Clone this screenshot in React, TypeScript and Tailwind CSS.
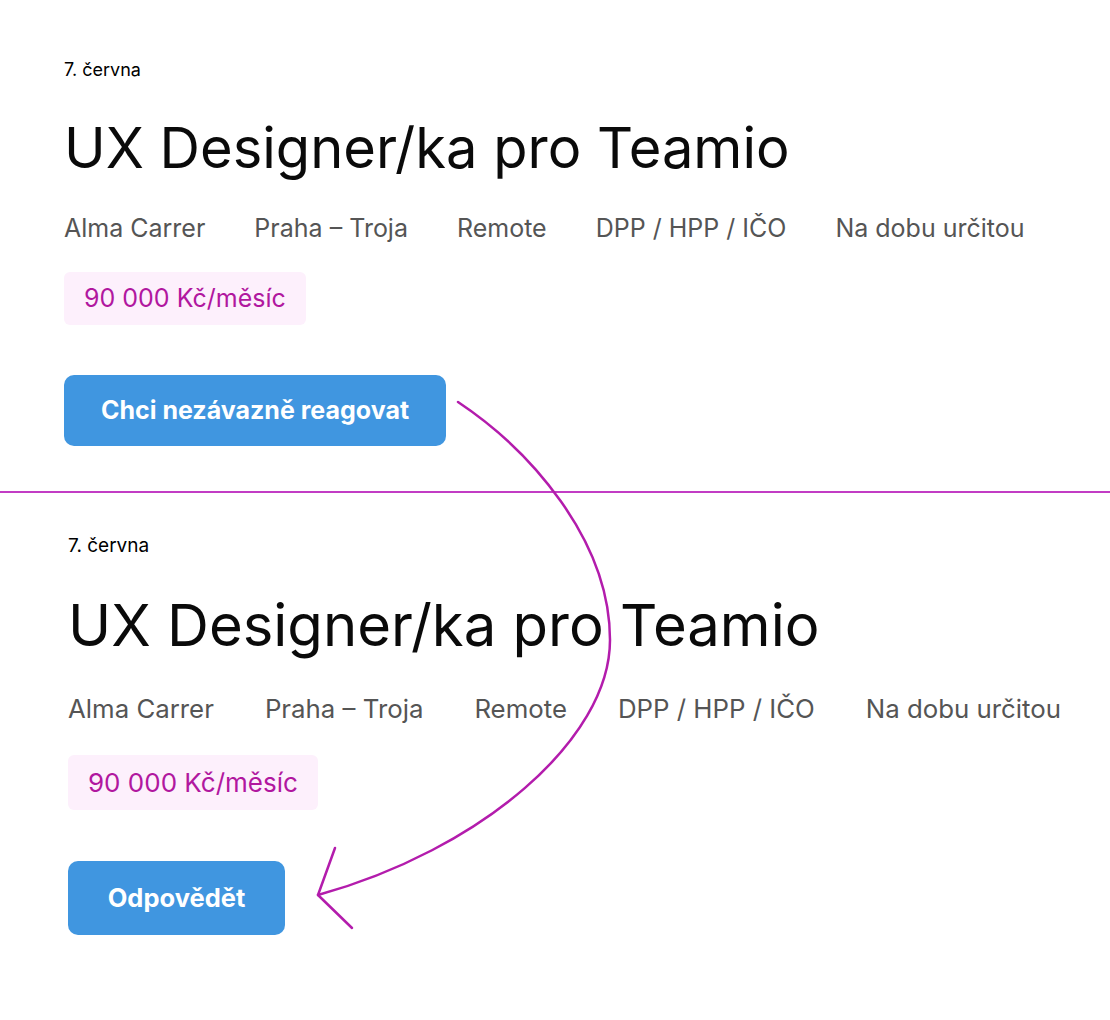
const meta = ["Alma Carrer", "Praha – Troja", "Remote", "DPP / HPP / IČO", "Na dobu určitou"];

function JobCard({ big, cta }: { big?: boolean; cta: string }) {
  return (
    <div className={big ? "pl-[68px]" : "pl-[64px]"}>
      <div className={big ? "text-[19px] leading-[24px] text-black" : "text-[18px] leading-[24px] text-black"}>7. června</div>
      <h1
        className={
          big
            ? "mt-[36px] text-[58px] leading-[62px] font-normal text-[#0a0a0a]"
            : "mt-[36px] text-[56px] leading-[60px] font-normal text-[#0a0a0a]"
        }
      >
        UX Designer/ka pro Teamio
      </h1>
      <div
        className={
          big
            ? "mt-[37px] flex gap-[51px] text-[25.8px] leading-[32px] text-[#555555]"
            : "mt-[34px] flex gap-[49px] text-[25px] leading-[32px] text-[#555555]"
        }
      >
        {meta.map((m) => (
          <span key={m}>{m}</span>
        ))}
      </div>
      <div
        className={
          big
            ? "mt-[30px] inline-flex h-[55px] items-center rounded-md bg-[#fdf0fc] px-[20px] text-[26px] text-[#b1179f]"
            : "mt-[28px] inline-flex h-[53px] items-center rounded-md bg-[#fdf0fc] px-[20px] text-[25px] text-[#b1179f]"
        }
      >
        90 000 Kč/měsíc
      </div>
      <div>
        <button
          className={
            big
              ? "mt-[51px] h-[74px] w-[217px] rounded-[10px] bg-[#4096e0] text-[25.5px] font-bold text-white"
              : "mt-[50px] h-[71px] w-[382px] rounded-[10px] bg-[#4096e0] text-[25px] font-bold text-white"
          }
        >
          {cta}
        </button>
      </div>
    </div>
  );
}

export default function App() {
  return (
    <div className="relative h-[1020px] w-[1110px] overflow-hidden bg-white pt-[58px] font-['Inter',sans-serif]">
      <JobCard cta="Chci nezávazně reagovat" />
      <div className="mt-[45px] h-[2px] bg-[#c23cc4]" />
      <div className="mt-[41px]">
        <JobCard big cta="Odpovědět" />
      </div>

      {/* hand-drawn arrow */}
      <svg className="pointer-events-none absolute inset-0" width="1110" height="1020" viewBox="0 0 1110 1020" fill="none">
        <path
          d="M458 402 C 530 450, 610 540, 610 640 C 610 740, 480 850, 318 895"
          stroke="#b31cac"
          strokeWidth="2.5"
          strokeLinecap="round"
        />
        <path d="M335 848 L318 895 L352 928" stroke="#b31cac" strokeWidth="2.5" strokeLinecap="round" strokeLinejoin="round" />
      </svg>
    </div>
  );
}
